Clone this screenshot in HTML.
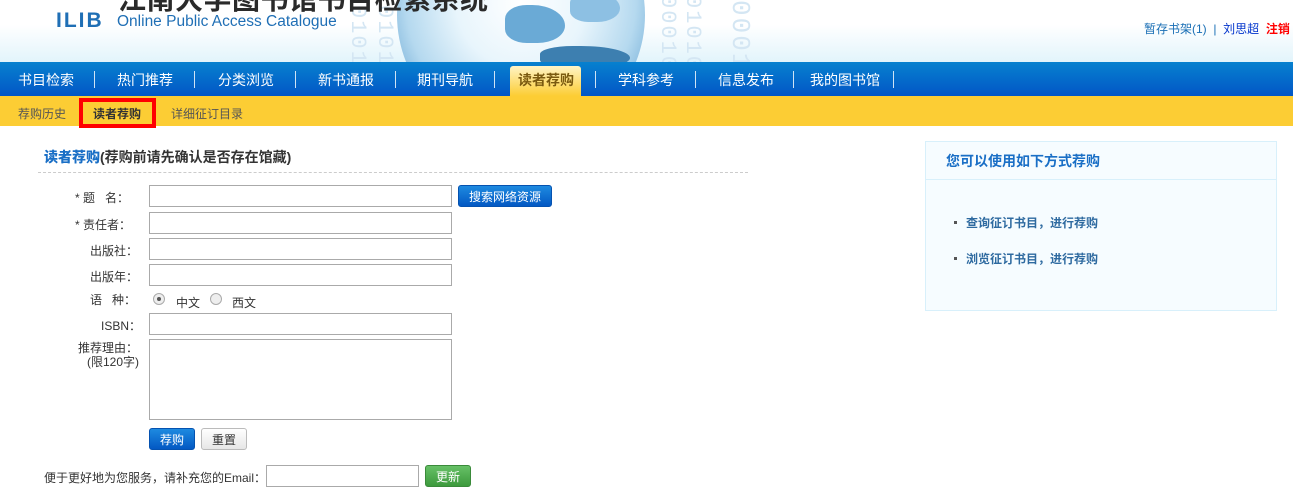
<!DOCTYPE html>
<html><head><meta charset="utf-8"><style>
*{margin:0;padding:0;box-sizing:border-box}
body{width:1293px;height:495px;overflow:hidden;background:#fff;font-family:"Liberation Sans","Noto Sans CJK SC","WenQuanYi Zen Hei",sans-serif;font-size:12px;color:#333;position:relative}
.hdr{position:absolute;left:0;top:0;width:1293px;height:62px;background:linear-gradient(#fff 0%,#fff 40%,#e2f4fb 100%);overflow:hidden}
.globe{position:absolute;left:397px;top:-110px;width:248px;height:250px;border-radius:50%;background:radial-gradient(circle at 50% 45%,#ffffff 0%,#e8f5fc 35%,#b5d9ef 62%,#5d9fcf 85%,#1d4f7f 100%)}
.land{position:absolute;background:#6aaad6;border-radius:40% 60% 50% 40%}
.bin{position:absolute;color:#d4e6f3;font-family:"Liberation Mono",monospace;font-size:22px;writing-mode:vertical-rl;letter-spacing:2px}
.title{position:absolute;left:118px;top:-22px;font-size:28px;font-weight:bold;color:#2a2a2a;letter-spacing:0.5px;white-space:nowrap}
.sub{position:absolute;left:117px;top:13px;font-size:15.5px;color:#1f6fb5;white-space:nowrap}
.ilib{position:absolute;left:56px;top:9px;font-size:21px;font-weight:bold;color:#1f6fb5;letter-spacing:2px}
.top-r{position:absolute;left:1144px;top:20px;font-size:12px;color:#1a6fb5;white-space:nowrap}
.nav{position:absolute;left:0;top:62px;width:1293px;height:34px;background:linear-gradient(#0781cf,#0256c6)}
.nav span{position:absolute;top:8px;color:#fff;font-size:14px}
.nav i{position:absolute;top:9px;width:1px;height:17px;background:#cfe3f5}
.act{position:absolute;left:510px;top:4px;width:71px;height:30px;background:linear-gradient(#fff4c6,#fccd34);border-radius:3px 3px 0 0}
.yb{position:absolute;left:0;top:96px;width:1293px;height:30px;background:#fccd34}
.yb span{position:absolute;top:9px;font-size:12px;color:#555}
.red{position:absolute;left:79px;top:98px;width:77px;height:30px;border:4px solid #f00}
.h1{position:absolute;left:44px;top:147px;font-size:14px;font-weight:bold;color:#333}
.h1 b{color:#1a6fc6}
.dash{position:absolute;left:38px;top:172px;width:710px;border-top:1px dashed #ccc}
.lab{position:absolute;font-size:12px;color:#333;white-space:nowrap}
.inp{position:absolute;left:149px;width:303px;height:22px;border:1px solid #aaa;background:#fff}
.btn{position:absolute;height:22px;border-radius:3px;font-size:12px;color:#fff;text-align:center;line-height:22px}
.blue{background:linear-gradient(#1e8ae0,#0358c3);border:1px solid #0552b0}
.rad{position:absolute;width:12px;height:12px;border-radius:50%;border:1px solid #aaa;background:#eee}
.box{position:absolute;left:925px;top:141px;width:352px;height:170px;border:1px solid #d8f0fb;background:#f6fcff}
.box .t{height:38px;border-bottom:1px solid #d8f0fb;padding:9px 0 0 20px;font-size:14px;font-weight:bold;color:#1a6fc6}
.box p{position:absolute;left:40px;font-size:12px;font-weight:bold;color:#2e6aa0}
.box p:before{content:"";position:absolute;left:-12px;top:7px;width:3px;height:3px;background:#555}
</style></head><body>
<div class="hdr">
<div class="bin" style="left:345px;top:5px">0101</div>
<div class="bin" style="left:372px;top:5px">0101</div>
<div class="globe"></div>
<div class="land" style="left:505px;top:5px;width:60px;height:38px"></div>
<div class="land" style="left:570px;top:-8px;width:50px;height:30px;background:#8dc0e3"></div>
<div class="land" style="left:540px;top:46px;width:90px;height:22px;background:#3d7fb0"></div>
<div class="bin" style="left:655px;top:-5px">00010</div>
<div class="bin" style="left:680px;top:-5px">01010</div>
<div class="bin" style="left:725px;top:0px;font-size:26px">0001</div>
<div class="ilib">ILIB</div>
<div class="title">江南大学图书馆书目检索系统</div>
<div class="sub">Online Public Access Catalogue</div>
<div class="top-r">暂存书架(1) &nbsp;| &nbsp;<span style="color:#0033cc">刘思超</span> &nbsp;<b style="color:#f00">注销</b></div>
</div>
<div class="nav">
<div class="act"></div>
<span style="left:18px">书目检索</span><i style="left:94px"></i>
<span style="left:117px">热门推荐</span><i style="left:194px"></i>
<span style="left:218px">分类浏览</span><i style="left:295px"></i>
<span style="left:318px">新书通报</span><i style="left:395px"></i>
<span style="left:417px">期刊导航</span><i style="left:494px"></i>
<span style="left:518px;color:#7a5a10;font-weight:bold">读者荐购</span><i style="left:595px"></i>
<span style="left:618px">学科参考</span><i style="left:695px"></i>
<span style="left:718px">信息发布</span><i style="left:793px"></i>
<span style="left:810px">我的图书馆</span><i style="left:893px"></i>
</div>
<div class="yb">
<span style="left:18px">荐购历史</span>
<span style="left:93px;font-weight:bold;color:#333">读者荐购</span>
<span style="left:171px">详细征订目录</span>
</div>
<div class="red"></div>
<div class="h1"><b>读者荐购</b>(荐购前请先确认是否存在馆藏)</div>
<div class="dash"></div>
<div class="lab" style="left:75px;top:189px">* 题&nbsp;&nbsp;&nbsp;名：</div>
<div class="inp" style="top:185px"></div>
<div class="btn blue" style="left:458px;top:185px;width:94px">搜索网络资源</div>
<div class="lab" style="left:75px;top:216px">* 责任者：</div>
<div class="inp" style="top:212px"></div>
<div class="lab" style="left:90px;top:242px">出版社：</div>
<div class="inp" style="top:238px"></div>
<div class="lab" style="left:90px;top:268px">出版年：</div>
<div class="inp" style="top:264px"></div>
<div class="lab" style="left:90px;top:291px">语&nbsp;&nbsp;&nbsp;种：</div>
<div class="rad" style="left:153px;top:293px"><div style="position:absolute;left:3px;top:3px;width:4px;height:4px;border-radius:50%;background:#555"></div></div>
<div class="lab" style="left:176px;top:294px">中文</div>
<div class="rad" style="left:210px;top:293px"></div>
<div class="lab" style="left:232px;top:294px">西文</div>
<div class="lab" style="left:101px;top:317px">ISBN：</div>
<div class="inp" style="top:313px"></div>
<div class="lab" style="left:78px;top:339px">推荐理由：</div>
<div class="lab" style="left:87px;top:353px">(限120字)</div>
<div class="inp" style="top:339px;height:81px"></div>
<div class="btn blue" style="left:149px;top:428px;width:46px">荐购</div>
<div class="btn" style="left:201px;top:428px;width:46px;background:linear-gradient(#fff,#e6e6e6);border:1px solid #bbb;color:#333">重置</div>
<div class="lab" style="left:44px;top:469px">便于更好地为您服务，请补充您的Email：</div>
<div class="inp" style="left:266px;top:465px;width:153px"></div>
<div class="btn" style="left:425px;top:465px;width:46px;background:linear-gradient(#66c066,#3d9a3d);border:1px solid #3a8a3a">更新</div>
<div class="box"><div class="t">您可以使用如下方式荐购</div>
<p style="top:72px">查询征订书目，进行荐购</p>
<p style="top:108px">浏览征订书目，进行荐购</p></div>
</body></html>
